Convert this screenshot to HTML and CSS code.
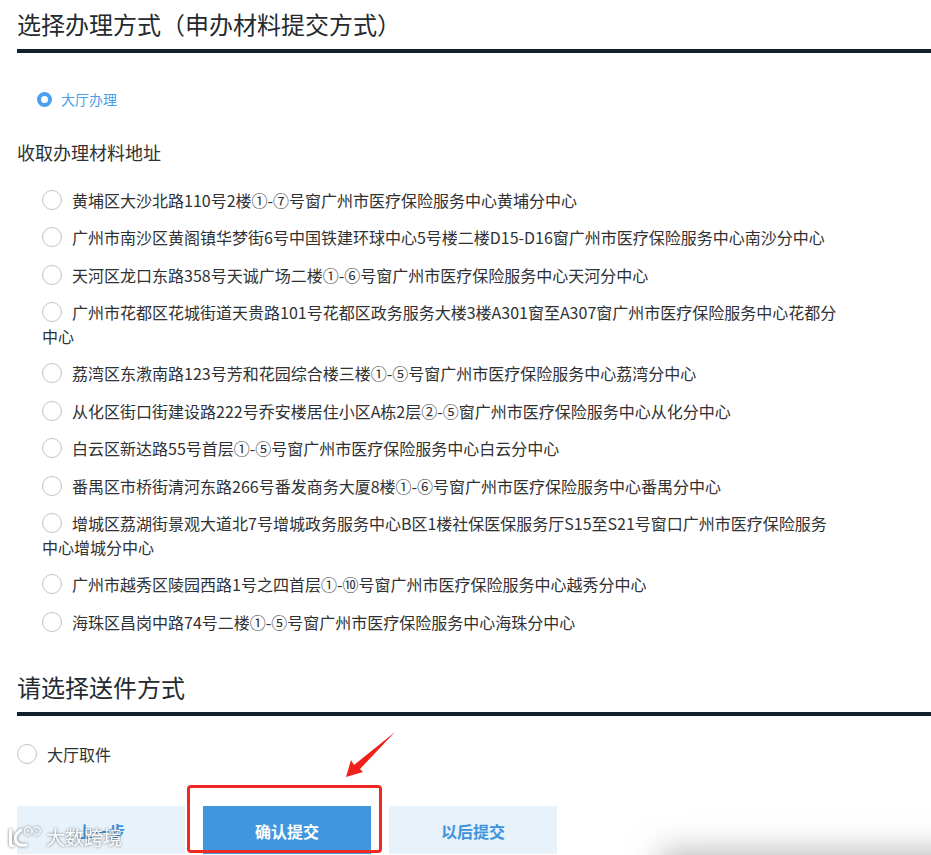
FILE: index.html
```html
<!DOCTYPE html>
<html lang="zh-CN">
<head>
<meta charset="utf-8">
<title>选择办理方式</title>
<link rel="stylesheet" href="styles.css">
</head>
<body>
<main class="page">
  <section class="section">
    <h2 class="heading">选择办理方式（申办材料提交方式）</h2>
    <div class="mode-row">
      <label class="mode"><span class="radio radio-on"></span><span class="mode-text">大厅办理</span></label>
    </div>
    <h3 class="subheading">收取办理材料地址</h3>
    <ul class="addresses">
      <li class="address"><span class="radio"></span>黄埔区大沙北路110号2楼①-⑦号窗广州市医疗保险服务中心黄埔分中心</li>
      <li class="address"><span class="radio"></span>广州市南沙区黄阁镇华梦街6号中国铁建环球中心5号楼二楼D15-D16窗广州市医疗保险服务中心南沙分中心</li>
      <li class="address"><span class="radio"></span>天河区龙口东路358号天诚广场二楼①-⑥号窗广州市医疗保险服务中心天河分中心</li>
      <li class="address"><span class="radio"></span>广州市花都区花城街道天贵路101号花都区政务服务大楼3楼A301窗至A307窗广州市医疗保险服务中心花都分中心</li>
      <li class="address"><span class="radio"></span>荔湾区东漖南路123号芳和花园综合楼三楼①-⑤号窗广州市医疗保险服务中心荔湾分中心</li>
      <li class="address"><span class="radio"></span>从化区街口街建设路222号乔安楼居住小区A栋2层②-⑤窗广州市医疗保险服务中心从化分中心</li>
      <li class="address"><span class="radio"></span>白云区新达路55号首层①-⑤号窗广州市医疗保险服务中心白云分中心</li>
      <li class="address"><span class="radio"></span>番禺区市桥街清河东路266号番发商务大厦8楼①-⑥号窗广州市医疗保险服务中心番禺分中心</li>
      <li class="address"><span class="radio"></span>增城区荔湖街景观大道北7号增城政务服务中心B区1楼社保医保服务厅S15至S21号窗口广州市医疗保险服务中心增城分中心</li>
      <li class="address"><span class="radio"></span>广州市越秀区陵园西路1号之四首层①-⑩号窗广州市医疗保险服务中心越秀分中心</li>
      <li class="address"><span class="radio"></span>海珠区昌岗中路74号二楼①-⑤号窗广州市医疗保险服务中心海珠分中心</li>
    </ul>
  </section>
  <section class="section section-delivery">
    <h2 class="heading">请选择送件方式</h2>
    <label class="pickup"><span class="radio"></span>大厅取件</label>
    <div class="actions">
      <button class="btn" type="button">上一步</button>
      <button class="btn btn-primary" type="button">确认提交</button>
      <button class="btn" type="button">以后提交</button>
    </div>
  </section>
</main>

<div class="mark-box"></div>
<svg class="mark-arrow" width="60" height="56" viewBox="0 0 60 56" aria-hidden="true">
  <path d="M54 1 L19 38 L22 41 L5 46 L10 29 L13 34 Z" fill="#f0201c"/>
</svg>

<div class="watermark">
  <svg class="watermark-logo" width="36" height="26" viewBox="0 0 36 26" aria-hidden="true">
    <g fill="none" stroke="#fff" stroke-linecap="round">
      <path d="M3.500 6 V20 Q3.500 22 5.500 22" stroke-width="3"/>
      <path d="M14 6 Q7 11 8.500 16 Q10.500 22.500 19 21" stroke-width="3"/>
      <circle cx="21" cy="7" r="3.800" stroke-width="1.200"/>
      <circle cx="29.500" cy="7" r="3.800" stroke-width="1.200"/>
    </g>
  </svg>
  <span class="watermark-text">大数跨境</span>
</div>
<div class="corner-shade"></div>
</body>
</html>
```
FILE: styles.css
```css
* { box-sizing: border-box; }
html, body { margin: 0; padding: 0; height: 855px; overflow: hidden; background: #fff; }
body {
  position: relative;
  font-family: "Noto Sans CJK SC", "Noto Sans", sans-serif;
  color: #303133;
}
.page { padding: 0 0 0 17px; }
.heading {
  margin: 0;
  height: 53px;
  border-bottom: 4px solid #13202e;
  font-size: 24px;
  font-weight: 400;
  line-height: 47px;
  color: #242a30;
}
.mode-row { padding: 35px 0 0 20px; height: 87px; }
.mode { display: flex; align-items: center; font-size: 14px; line-height: 22px; color: #4a9fe8; }
.mode-text { margin-left: 9px; }
.radio {
  display: inline-block;
  width: 20px;
  height: 20px;
  border: 1px solid #c4c4c4;
  border-radius: 50%;
  background: #fff;
  flex: none;
}
.radio-on {
  width: 15px;
  height: 15px;
  border: 4.500px solid #4a9ff0;
}
.subheading {
  margin: 0;
  font-size: 18px;
  font-weight: 400;
  line-height: 24px;
  color: #303133;
}
.addresses {
  list-style: none;
  margin: 0;
  padding: 24.750px 0 0 25px;
  width: 823px;
}
.address {
  font-size: 16px;
  line-height: 23.500px;
  margin-bottom: 14px;
  color: #303133;
}
.address .radio { vertical-align: -3px; margin-right: 10px; }
.section-delivery { margin-top: 24.250px; }
.section-delivery .heading { height: 57px; line-height: 56px; }
.pickup {
  display: flex;
  align-items: center;
  margin: 26px 0 0 0;
  font-size: 16px;
  line-height: 24px;
  color: #303133;
}
.pickup .radio { margin-right: 10px; }
.actions {
  display: flex;
  gap: 18px;
  height: 48px;
  overflow: hidden;
  margin-top: 40px;
}
.btn {
  width: 168px;
  height: 50px;
  border: 0;
  padding: 0;
  background: #e8f2fb;
  color: #3f93dc;
  font: 700 16px/50px "Noto Sans CJK SC", "Noto Sans", sans-serif;
}
.btn-primary { background: #4097e0; color: #fff; }

/* Annotations laid over the screenshot */
.mark-box {
  position: absolute;
  left: 187px;
  top: 785px;
  width: 195px;
  height: 68px;
  border: 3px solid #ee2a22;
  border-radius: 4px;
}
.mark-arrow { position: absolute; left: 341px; top: 731px; }
.watermark {
  position: absolute;
  left: 7px;
  top: 824px;
  display: flex;
  align-items: center;
  gap: 3px;
  color: #fff;
  filter: drop-shadow(0 0 1.500px rgba(60, 60, 60, .8));
  opacity: .9;
}
.watermark-text { font-size: 19px; line-height: 26px; }
.corner-shade {
  position: absolute;
  left: 675px;
  right: -40px;
  top: 866px;
  height: 20px;
  background: #999;
  box-shadow: 0 0 32px 14px rgba(120, 120, 120, .55);
}
```
